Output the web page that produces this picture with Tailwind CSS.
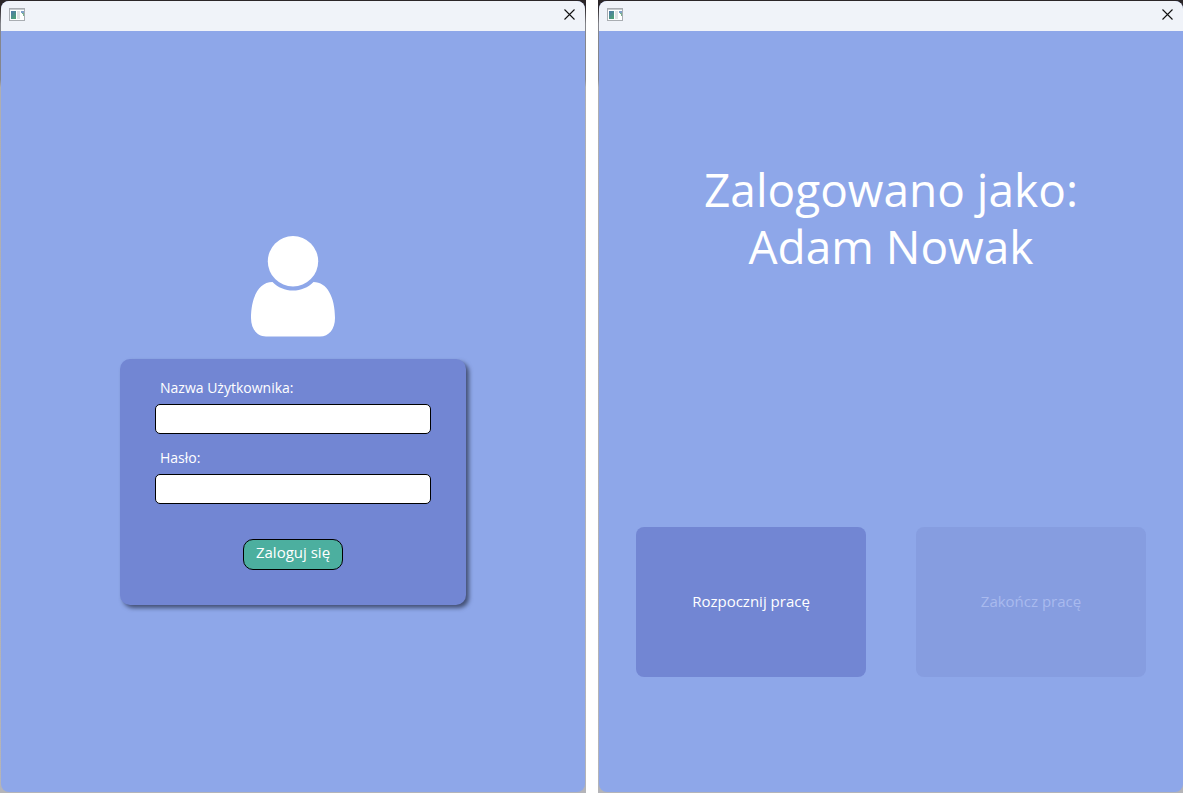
<!DOCTYPE html>
<html lang="pl">
<head>
<meta charset="utf-8">
<meta name="viewport" content="width=device-width, initial-scale=1">
<title>Logowanie</title>
<script src="https://cdn.jsdelivr.net/npm/@tailwindcss/browser@4"></script>
</head>
<body class="bg-white font-['Open_Sans','Noto_Sans',sans-serif] text-white">
<svg class="absolute size-0" aria-hidden="true">
  <defs>
    <linearGradient id="pane" x1="0" y1="0" x2="0.6" y2="1"><stop offset="0" stop-color="#4f78ac"/><stop offset="1" stop-color="#4f9f78"/></linearGradient>
    <symbol id="app" viewBox="0 0 16 13">
      <path fill="#a9adb2" d="M0 0h16v13H0z"/>
      <path fill="#c6cacd" d="M1 1h14v1H1z"/>
      <path fill="#fff" d="M1 2h14v10H1z"/>
      <path fill="url(#pane)" d="M2 3h5v8H2z"/>
      <path fill="#dfe2e4" d="M8 3h3v8H8z"/>
      <path fill="#7fa0c8" d="M12 3h3v2h-3z"/>
      <path fill="#79b08f" d="M13 5h2v3h-1V6h-1z"/>
    </symbol>
    <symbol id="close" viewBox="0 0 11 11">
      <path fill="none" stroke="#111" stroke-width="1.1" d="M.5.5l10 10M10.500.5l-10 10"/>
    </symbol>
  </defs>
</svg>
<main class="flex min-h-screen gap-3">
  <div class="flex flex-1 bg-[linear-gradient(#2b2629_1%,#85868c_3%,#85868c_10%,#aeaeb2_11%,#b4b4b8)] p-px">
    <section class="flex flex-1 flex-col overflow-hidden rounded-lg bg-[#8ea7e9]">
      <header class="flex h-[30px] items-center justify-between bg-[#f0f3f9] pr-[10px] pb-[3px] pl-2">
        <svg class="h-[13px] w-4" aria-hidden="true"><use href="#app"/></svg>
        <button type="button" aria-label="Zamknij"><svg class="size-[11px]" aria-hidden="true"><use href="#close"/></svg></button>
      </header>
      <div class="flex flex-1 flex-col items-center pt-[205px]">
        <svg class="h-[101px] w-[84px]" viewBox="0 0 84 101" fill="#fff" aria-hidden="true">
          <circle cx="42" cy="25.300" r="25.200"/>
          <path d="M21.500 46C27 51.500 34 54.600 42 54.600S57 51.500 62.500 46C76 46 84 61 84 82C84 93 78 100.500 69 100.500H15C6 100.500 0 93 0 82C0 61 8 46 21.500 46Z"/>
        </svg>
        <form class="mt-[22px] flex w-[346px] flex-col rounded-[10px] bg-[#7286d3] px-[35px] pt-[15px] pb-[35px] text-sm shadow-[3px_3px_4px_#435075]">
          <label for="user" class="flex h-[30px] items-center pb-[2px] pl-[5px]">Nazwa Użytkownika:</label>
          <input id="user" type="text" class="h-[30px] rounded-[5px] border border-black bg-white px-2 text-black">
          <label for="pass" class="mt-[10px] flex h-[30px] items-center pb-[2px] pl-[5px]">Hasło:</label>
          <input id="pass" type="password" class="h-[30px] rounded-[5px] border border-black bg-white px-2 text-black">
          <button type="button" class="mt-[35px] flex h-[31px] w-[100px] items-center justify-center self-center rounded-[10px] border border-black bg-[#4caf9f] pb-[3px] text-[15px]">Zaloguj się</button>
        </form>
      </div>
    </section>
  </div>
  <div class="flex flex-1 bg-[linear-gradient(#2b2629_1%,#85868c_3%,#85868c_10%,#aeaeb2_11%,#b4b4b8)] py-px pl-px">
    <section class="flex flex-1 flex-col overflow-hidden rounded-lg bg-[#8ea7e9]">
      <header class="flex h-[30px] items-center justify-between bg-[#f0f3f9] pr-[10px] pb-[3px] pl-2">
        <svg class="h-[13px] w-4" aria-hidden="true"><use href="#app"/></svg>
        <button type="button" aria-label="Zamknij"><svg class="size-[11px]" aria-hidden="true"><use href="#close"/></svg></button>
      </header>
      <div class="flex flex-1 flex-col items-center justify-between pt-[130px] pb-[115px]">
        <h1 class="text-center text-[46px] leading-[57px]">Zalogowano jako:<br>Adam Nowak</h1>
        <div class="flex gap-[50px] text-[15px]">
          <button type="button" class="h-[150px] w-[230px] rounded-lg bg-[#7286d3] pb-[2px]">Rozpocznij pracę</button>
          <button type="button" disabled class="h-[150px] w-[230px] rounded-lg bg-[#869de0] pb-[2px] text-[#a9baee]">Zakończ pracę</button>
        </div>
      </div>
    </section>
  </div>
</main>
</body>
</html>
